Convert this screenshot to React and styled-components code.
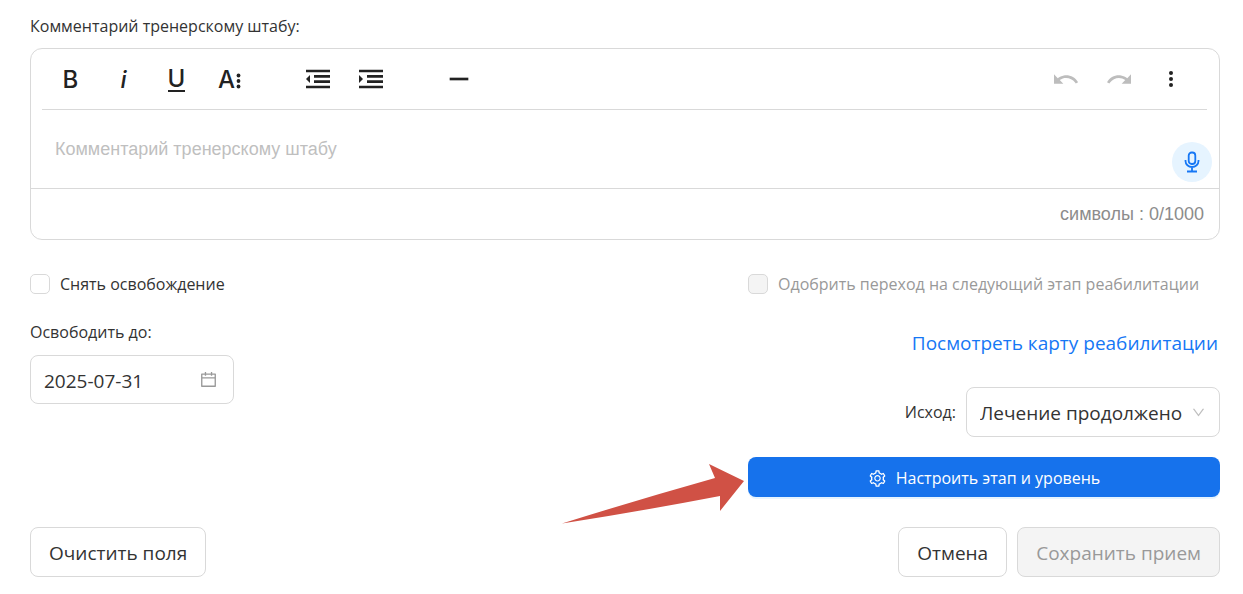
import React, { useState } from "react";
import styled, { createGlobalStyle } from "styled-components";
import { AiOutlineCalendar, AiOutlineDown, AiOutlineSetting } from "react-icons/ai";

const colors = {
  text: "#333333",
  muted: "#999999",
  line: "#d9d9d9",
  disabled: "#f4f4f4",
  primary: "#1672ec",
  link: "#1677f5",
};

const GlobalStyle = createGlobalStyle`
  *, *::before, *::after { box-sizing: border-box; }
  body {
    margin: 0;
    background: #ffffff;
    color: ${colors.text};
    font-family: "Open Sans", "Noto Sans", sans-serif;
    font-size: 16px;
    line-height: 24px;
  }
  button, input, select, textarea { font: inherit; color: inherit; }
`;

const Form = styled.form`
  display: flex;
  flex-direction: column;
  padding: 14px 23px 17px 30px;
`;

const FieldLabel = styled.label`
  font-size: 16px;
  line-height: 24px;
`;

const Editor = styled.div`
  display: flex;
  flex-direction: column;
  margin-top: 10px;
  border: 1px solid ${colors.line};
  border-radius: 12px;
`;

const Toolbar = styled.div`
  display: flex;
  justify-content: space-between;
  margin: 0 12px 0 11px;
  padding: 0 9px 0 2px;
  border-bottom: 1px solid ${colors.line};
`;

const ToolGroups = styled.div`
  display: flex;
  gap: 35px;
`;

const ToolGroup = styled.div`
  display: flex;
`;

const ToolButton = styled.button`
  display: flex;
  align-items: center;
  justify-content: center;
  gap: 1px;
  width: 53px;
  height: 60px;
  padding: 0;
  border: 0;
  background: none;
  color: #222222;

  &:disabled { color: #bdbdbd; }
`;

const ToolLetter = styled.span`
  padding-top: 2px;
  font-family: Inter, sans-serif;
  font-size: 24px;
  line-height: 24px;
  font-weight: ${(p) => p.$weight || 500};
  font-style: ${(p) => (p.$italic ? "italic" : "normal")};
`;

const UnderlinedLetter = styled(ToolLetter)`
  line-height: 22px;
  border-bottom: 2px solid currentColor;
`;

const ToolSvg = styled.svg`
  width: ${(p) => p.$width || 32}px;
  height: 32px;
  fill: currentColor;
`;

const EditorBody = styled.div`
  display: flex;
  align-items: flex-end;
  height: 79px;
  padding: 0 7px 6px 24px;
  border-bottom: 1px solid ${colors.line};
`;

const EditorArea = styled.textarea`
  flex: 1;
  align-self: stretch;
  padding: 27px 0 0;
  border: 0;
  outline: 0;
  resize: none;
  background: none;
  font-family: "Liberation Sans", Arial, sans-serif;
  font-size: 18px;
  line-height: 24px;

  &::placeholder { color: #bfbfbf; opacity: 1; }
`;

const MicButton = styled.button`
  display: flex;
  align-items: center;
  justify-content: center;
  width: 40px;
  height: 40px;
  padding: 0;
  border: 0;
  border-radius: 50%;
  background: #e6f4ff;
  color: ${colors.link};
`;

const Counter = styled.div`
  padding: 13px 15px;
  color: #8c8c8c;
  font-family: "Liberation Sans", Arial, sans-serif;
  font-size: 18px;
  line-height: 24px;
  text-align: right;
`;

const Columns = styled.div`
  display: grid;
  grid-template-columns: 3fr 2fr;
  gap: 10px;
  margin-top: 32px;
`;

const LeftColumn = styled.div`
  display: flex;
  flex-direction: column;
  align-items: flex-start;
`;

const RightColumn = styled.div`
  display: flex;
  flex-direction: column;
  align-items: flex-end;
`;

const CheckLabel = styled.label`
  display: flex;
  align-items: center;
  align-self: flex-start;
  gap: 10px;
  white-space: nowrap;
  color: ${(p) => (p.$disabled ? colors.muted : colors.text)};
`;

const Checkbox = styled.input`
  appearance: none;
  width: 20px;
  height: 20px;
  margin: 0;
  border: 1px solid ${colors.line};
  border-radius: 5px;
  background: #ffffff;

  &:checked { background: ${colors.primary}; }
  &:disabled { background: ${colors.disabled}; }
`;

const DateField = styled.div`
  display: flex;
  flex-direction: column;
  margin-top: 24px;
  gap: 11px;
`;

const DateBox = styled.div`
  display: flex;
  align-items: center;
  width: 204px;
  height: 49px;
  padding: 0 15px 0 13px;
  border: 1px solid ${colors.line};
  border-radius: 8px;
  color: ${colors.muted};
`;

const DateInput = styled.input`
  flex: 1;
  min-width: 0;
  padding: 2px 0 0;
  border: 0;
  outline: 0;
  background: none;
  color: ${colors.text};
  font-size: 19px;
`;

const MapLink = styled.a`
  margin-top: 33px;
  padding-right: 2px;
  color: ${colors.link};
  font-size: 19px;
  line-height: 28px;
  text-decoration: none;
  white-space: nowrap;
`;

const OutcomeRow = styled.div`
  display: flex;
  align-items: center;
  gap: 10px;
  margin-top: 30px;
`;

const SelectBox = styled.div`
  display: grid;
  align-items: center;
  width: 254px;
  height: 50px;

  & > * { grid-area: 1 / 1; }
  & > svg {
    justify-self: end;
    margin-right: 14px;
    color: #bfbfbf;
    pointer-events: none;
  }
`;

const Select = styled.select`
  appearance: none;
  width: 100%;
  height: 100%;
  padding: 2px 32px 0 13px;
  border: 1px solid ${colors.line};
  border-radius: 8px;
  background: #ffffff;
  font-size: 19px;
`;

const StageAction = styled.div`
  position: relative;
  align-self: stretch;
  margin-top: 20px;
`;

const Pointer = styled.svg`
  position: absolute;
  top: 7px;
  right: calc(100% + 4px);
  width: 182px;
  height: 60px;
  fill: #d05145;
  pointer-events: none;
`;

const Button = styled.button`
  display: flex;
  align-items: center;
  justify-content: center;
  height: 50px;
  padding: 2px 18px 0;
  border: 1px solid ${colors.line};
  border-radius: 8px;
  background: #ffffff;
  font-size: 19px;
  white-space: nowrap;

  &:disabled {
    background: ${colors.disabled};
    color: ${colors.muted};
  }
`;

const PrimaryButton = styled(Button)`
  gap: 9px;
  width: 100%;
  height: 40px;
  border: 0;
  background: ${colors.primary};
  box-shadow: 0 2px 0 #e6f4ff;
  color: #ffffff;
  font-size: 16px;
`;

const Footer = styled.footer`
  display: flex;
  justify-content: space-between;
  margin-top: 30px;
`;

const FooterActions = styled.div`
  display: flex;
  gap: 10px;
`;

function ToolIcon({ d }) {
  return (
    <ToolSvg viewBox="0 0 24 24" aria-hidden="true">
      <path d={d} />
    </ToolSvg>
  );
}

function Dots({ width, x, y, radius, step }) {
  return (
    <ToolSvg $width={width} viewBox={`0 0 ${width} 32`} aria-hidden="true">
      <circle cx={x} cy={y - step} r={radius} />
      <circle cx={x} cy={y} r={radius} />
      <circle cx={x} cy={y + step} r={radius} />
    </ToolSvg>
  );
}

function EditorToolbar() {
  return (
    <Toolbar role="toolbar">
      <ToolGroups>
        <ToolGroup>
          <ToolButton type="button"><ToolLetter>B</ToolLetter></ToolButton>
          <ToolButton type="button"><ToolLetter $italic>i</ToolLetter></ToolButton>
          <ToolButton type="button"><UnderlinedLetter>U</UnderlinedLetter></ToolButton>
          <ToolButton type="button">
            <ToolLetter>A</ToolLetter>
            <Dots width={5} x={2.5} y={18} radius={1.9} step={5.5} />
          </ToolButton>
        </ToolGroup>
        <ToolGroup>
          <ToolButton type="button" aria-label="Уменьшить отступ">
            <ToolIcon d="M3,12l3,3V9L3,12z M3,19h18v-2H3V19z M3,7h18V5H3V7z M9,11h12V9H9V11z M9,15h12v-2H9V15z" />
          </ToolButton>
          <ToolButton type="button" aria-label="Увеличить отступ">
            <ToolIcon d="M3,9v6l3-3L3,9z M3,19h18v-2H3V19z M3,7h18V5H3V7z M9,11h12V9H9V11z M9,15h12v-2H9V15z" />
          </ToolButton>
        </ToolGroup>
        <ToolGroup>
          <ToolButton type="button" aria-label="Линия">
            <ToolIcon d="M5,11h14v2H5V11z" />
          </ToolButton>
        </ToolGroup>
      </ToolGroups>
      <ToolGroup>
        <ToolButton type="button" disabled aria-label="Отменить">
          <ToolIcon d="M10.4,9.4c-1.7,0.3-3.2,0.9-4.6,2L3,8.5v7h7l-2.7-2.7c3.7-2.6,8.8-1.8,11.5,1.9c0.2,0.2,0.3,0.5,0.5,0.7l1.8-0.9C18.9,10.7,14.7,8.7,10.4,9.4z" />
        </ToolButton>
        <ToolButton type="button" disabled aria-label="Повторить">
          <ToolIcon d="M13.6,9.4c1.7,0.3,3.2,0.9,4.6,2L21,8.5v7h-7l2.7-2.7C13,10.1,7.9,11,5.3,14.7c-0.2,0.2-0.3,0.5-0.5,0.7L3,14.5C5.1,10.7,9.3,8.7,13.6,9.4z" />
        </ToolButton>
        <ToolButton type="button" aria-label="Ещё">
          <Dots width={32} x={15} y={16} radius={2} step={6} />
        </ToolButton>
      </ToolGroup>
    </Toolbar>
  );
}

function MicIcon() {
  return (
    <svg width="16" height="22" viewBox="0 0 16 22" fill="none" stroke="currentColor" strokeWidth="1.8" aria-hidden="true">
      <rect x="4.700" y="1.500" width="6.600" height="11.500" rx="3" />
      <path d="M1.500 9v1a6.500 6 0 0 0 13 0V9M8 16V20M3 20.500h10" />
    </svg>
  );
}

export default function App() {
  const [comment, setComment] = useState("");
  const [release, setRelease] = useState(false);
  const [date, setDate] = useState("2025-07-31");

  return (
    <>
      <GlobalStyle />
      <Form onSubmit={(e) => e.preventDefault()}>
        <FieldLabel htmlFor="comment">Комментарий тренерскому штабу:</FieldLabel>
        <Editor>
          <EditorToolbar />
          <EditorBody>
            <EditorArea
              id="comment"
              maxLength={1000}
              placeholder="Комментарий тренерскому штабу"
              value={comment}
              onChange={(e) => setComment(e.target.value)}
            />
            <MicButton type="button" aria-label="Диктовать"><MicIcon /></MicButton>
          </EditorBody>
          <Counter>символы : {comment.length}/1000</Counter>
        </Editor>

        <Columns>
          <LeftColumn>
            <CheckLabel>
              <Checkbox type="checkbox" checked={release} onChange={(e) => setRelease(e.target.checked)} />
              Снять освобождение
            </CheckLabel>
            <DateField>
              <FieldLabel htmlFor="until">Освободить до:</FieldLabel>
              <DateBox>
                <DateInput id="until" value={date} onChange={(e) => setDate(e.target.value)} />
                <AiOutlineCalendar size={19} />
              </DateBox>
            </DateField>
          </LeftColumn>

          <RightColumn>
            <CheckLabel $disabled>
              <Checkbox type="checkbox" disabled />
              Одобрить переход на следующий этап реабилитации
            </CheckLabel>
            <MapLink href="#map">Посмотреть карту реабилитации</MapLink>
            <OutcomeRow>
              <FieldLabel htmlFor="outcome">Исход:</FieldLabel>
              <SelectBox>
                <Select id="outcome" defaultValue="continued">
                  <option value="continued">Лечение продолжено</option>
                </Select>
                <AiOutlineDown size={15} />
              </SelectBox>
            </OutcomeRow>
            <StageAction>
              <Pointer viewBox="0 0 182 60" aria-hidden="true">
                <path d="M182 17L147 0L153 14Q75 36 0 59.500Q80 47 158 32V47Z" />
              </Pointer>
              <PrimaryButton type="button">
                <AiOutlineSetting size={19} />
                Настроить этап и уровень
              </PrimaryButton>
            </StageAction>
          </RightColumn>
        </Columns>

        <Footer>
          <Button type="reset">Очистить поля</Button>
          <FooterActions>
            <Button type="button">Отмена</Button>
            <Button type="submit" disabled>Сохранить прием</Button>
          </FooterActions>
        </Footer>
      </Form>
    </>
  );
}
